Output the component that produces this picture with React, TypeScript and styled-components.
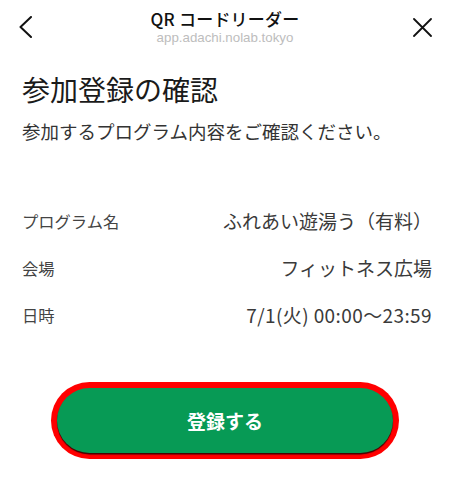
import React from "react";
import styled, { createGlobalStyle } from "styled-components";

const GlobalStyle = createGlobalStyle`
  body {
    margin: 0;
    background: #fff;
    font-family: "Noto Sans CJK JP", "Noto Sans", sans-serif;
  }
`;

const rows = [
  { label: "プログラム名", value: "ふれあい遊湯う（有料）", spaced: false },
  { label: "会場", value: "フィットネス広場", spaced: false },
  { label: "日時", value: "7/1(火) 00:00〜23:59", spaced: true },
];

export default function App() {
  return (
    <Page>
      <GlobalStyle />
      {/* Top bar */}
      <Header>
        <IconCell>
          <svg width="13" height="22" viewBox="0 0 13 22" fill="none">
            <polyline
              points="12,1 1.5,11 12,21"
              stroke="#111"
              strokeWidth="2"
              strokeLinecap="round"
              strokeLinejoin="round"
            />
          </svg>
        </IconCell>
        <TitleBlock>
          <Title>QR コードリーダー</Title>
          <Url>app.adachi.nolab.tokyo</Url>
        </TitleBlock>
        <IconCell $right>
          <svg width="19" height="19" viewBox="0 0 19 19" fill="none">
            <path
              d="M1 1L18 18M18 1L1 18"
              stroke="#111"
              strokeWidth="1.8"
              strokeLinecap="round"
            />
          </svg>
        </IconCell>
      </Header>

      {/* Body */}
      <Content>
        <Heading>参加登録の確認</Heading>
        <Lead>参加するプログラム内容をご確認ください。</Lead>
        <Details>
          {rows.map((r) => (
            <Row key={r.label}>
              <Label>{r.label}</Label>
              <Value $spaced={r.spaced}>{r.value}</Value>
            </Row>
          ))}
        </Details>
      </Content>

      <Footer>
        <Outline>
          <SubmitButton>登録する</SubmitButton>
        </Outline>
      </Footer>
    </Page>
  );
}

// Styled Components

const Page = styled.div`
  width: 450px;
  height: 500px;
  background: #fff;
  overflow: hidden;
`;

const Header = styled.header`
  display: grid;
  grid-template-columns: 48px 1fr 48px;
  align-items: center;
  padding-top: 8px;
`;

const IconCell = styled.div<{ $right?: boolean }>`
  display: flex;
  justify-content: ${(p) => (p.$right ? "flex-end" : "flex-start")};
  padding: ${(p) => (p.$right ? "0 18px 0 0" : "0 0 0 19px")};

  svg {
    display: block;
  }
`;

const TitleBlock = styled.div`
  display: flex;
  flex-direction: column;
  align-items: center;
`;

const Title = styled.div`
  font-size: 17px;
  line-height: 22px;
  font-weight: 500;
  color: #111;
  letter-spacing: 0.2px;
`;

const Url = styled.div`
  font-family: "Liberation Sans", "Noto Sans", sans-serif;
  font-size: 13.3px;
  line-height: 16px;
  color: #bdbdbd;
`;

const Content = styled.main`
  padding: 25px 18px 0 22px;
`;

const Heading = styled.h1`
  margin: 0;
  font-size: 28px;
  line-height: 36px;
  font-weight: 400;
  color: #1a1a1a;
`;

const Lead = styled.p`
  margin: 11px 0 0;
  font-size: 18.5px;
  line-height: 26px;
  color: #333;
`;

const Details = styled.div`
  margin-top: 53px;
  display: flex;
  flex-direction: column;
`;

const Row = styled.div`
  height: 47px;
  display: flex;
  align-items: center;
  justify-content: space-between;
`;

const Label = styled.span`
  font-size: 16.3px;
  color: #444;
`;

const Value = styled.span<{ $spaced?: boolean }>`
  font-size: 19px;
  color: #3a3a3a;
  letter-spacing: ${(p) => (p.$spaced ? "0.4px" : "0")};
`;

const Footer = styled.div`
  display: flex;
  justify-content: center;
  margin-top: 44px;
`;

const Outline = styled.div`
  width: 348px;
  padding: 6px;
  box-sizing: border-box;
  background: #ff0000;
  border-radius: 40px;
`;

const SubmitButton = styled.button`
  display: block;
  width: 100%;
  height: 65px;
  border: none;
  border-radius: 34px;
  background: #079a55;
  color: #fff;
  font-family: "Noto Sans CJK JP", sans-serif;
  font-size: 19px;
  font-weight: 700;
  box-shadow: 0 1.5px 1px rgba(0, 0, 0, 0.75);
  cursor: pointer;
`;
